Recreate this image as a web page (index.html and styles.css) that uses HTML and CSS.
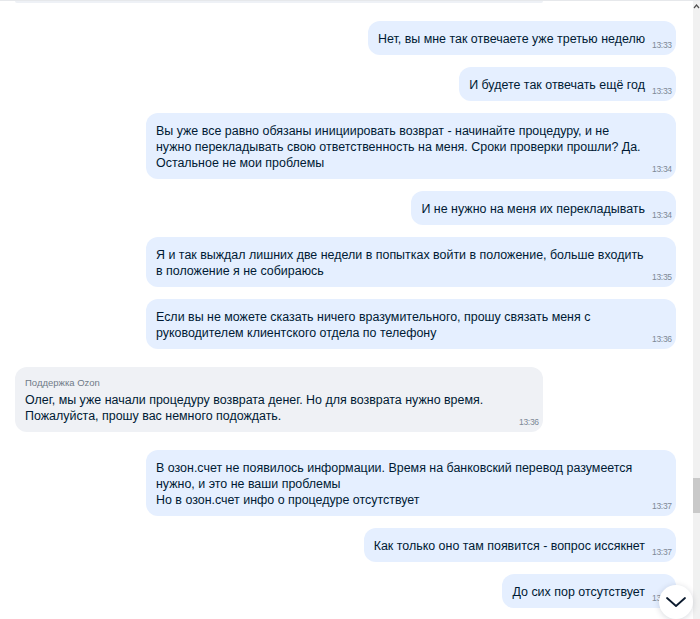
FILE: index.html
```html
<!DOCTYPE html>
<html lang="ru">
<head>
<meta charset="utf-8">
<link rel="stylesheet" href="styles.css">
</head>
<body>
<div class="screen">
  <main class="chat">
    <div class="prev"></div>
    <div class="msg out"><div class="text">Нет, вы мне так отвечаете уже третью неделю</div><span class="time">13:33</span></div>
    <div class="msg out"><div class="text">И будете так отвечать ещё год</div><span class="time">13:33</span></div>
    <div class="msg out wide"><div class="text">Вы уже все равно обязаны инициировать возврат - начинайте процедуру, и не<br>нужно перекладывать свою ответственность на меня. Сроки проверки прошли? Да.<br>Остальное не мои проблемы</div><span class="time">13:34</span></div>
    <div class="msg out"><div class="text">И не нужно на меня их перекладывать</div><span class="time">13:34</span></div>
    <div class="msg out wide"><div class="text">Я и так выждал лишних две недели в попытках войти в положение, больше входить<br>в положение я не собираюсь</div><span class="time">13:35</span></div>
    <div class="msg out wide"><div class="text">Если вы не можете сказать ничего вразумительного, прошу связать меня с<br>руководителем клиентского отдела по телефону</div><span class="time">13:36</span></div>
    <div class="msg in wide"><div class="text"><div class="sender">Поддержка Ozon</div>Олег, мы уже начали процедуру возврата денег. Но для возврата нужно время.<br>Пожалуйста, прошу вас немного подождать.</div><span class="time">13:36</span></div>
    <div class="msg out wide"><div class="text">В озон.счет не появилось информации. Время на банковский перевод разумеется<br>нужно, и это не ваши проблемы<br>Но в озон.счет инфо о процедуре отсутствует</div><span class="time">13:37</span></div>
    <div class="msg out"><div class="text">Как только оно там появится - вопрос иссякнет</div><span class="time">13:37</span></div>
    <div class="msg out"><div class="text">До сих пор отсутствует</div><span class="time">13:37</span></div>
  </main>
  <div class="scrollbar">
    <svg class="arrow" width="7" height="8" viewBox="0 0 7 8"><path d="M1 6 L3.5 3 L6 6" fill="none" stroke="#505050" stroke-width="1.2"/></svg>
    <div class="thumb"></div>
  </div>
  <button class="down" aria-label="Вниз">
    <svg width="22" height="12" viewBox="0 0 22 12"><path d="M2 2 L11 10 L20 2" fill="none" stroke="#0b1a2e" stroke-width="1.8" stroke-linecap="round" stroke-linejoin="round"/></svg>
  </button>
</div>
</body>
</html>
```

FILE: styles.css
```css
* { box-sizing: border-box; }
html, body {
  margin: 0;
  height: 619px;
  overflow: hidden;
  background: #fff;
}
body {
  font-family: "Liberation Sans", Arial, sans-serif;
  color: #001a34;
}
.screen {
  position: relative;
  height: 619px;
  display: grid;
  grid-template-columns: 1fr 7px;
  border-top: 1px solid #e6e8eb;
}
.chat {
  display: flex;
  flex-direction: column;
  gap: 12px;
  padding: 0 17px 0 15px;
  overflow: hidden;
}
.prev {
  height: 2px;
  width: 528px;
  background: #eef1f6;
  border-radius: 0 0 6px 6px;
  margin-bottom: 6px;
}
.msg {
  display: flex;
  align-items: flex-end;
  max-width: 530px;
  padding: 10px 4px 4px 10px;
  border-radius: 12px;
  font-size: 12.45px;
  line-height: 16px;
}
.msg.out {
  align-self: flex-end;
  background: #e5efff;
}
.msg.in {
  align-self: flex-start;
  background: #eff1f5;
  margin: 6px 0;
}
.msg.wide { width: 530px; }
.msg.in.wide { width: 528px; }
.text {
  flex: 1;
  min-width: 0;
  padding-bottom: 4px;
  white-space: nowrap;
}
.sender {
  font-size: 9.5px;
  line-height: 12px;
  color: #6f7b88;
  margin-bottom: 3px;
}
.time {
  flex: none;
  margin-left: 7px;
  font-size: 8.5px;
  line-height: 11px;
  color: #7d8896;
  letter-spacing: -0.3px;
  width: 20px;
}
.scrollbar {
  position: relative;
  background: #f1f1f1;
  display: flex;
  flex-direction: column;
  align-items: center;
}
.arrow {
  margin-top: 1px;
}
.thumb {
  width: 7px;
  height: 35px;
  margin-top: 468px;
  background: #c9c9c9;
}
.down {
  position: absolute;
  left: 659px;
  top: 584px;
  width: 34px;
  height: 34px;
  border-radius: 50%;
  border: none;
  background: #fff;
  box-shadow: 0 1px 6px rgba(0, 26, 52, 0.16);
  display: flex;
  align-items: center;
  justify-content: center;
  padding: 0;
}
```
